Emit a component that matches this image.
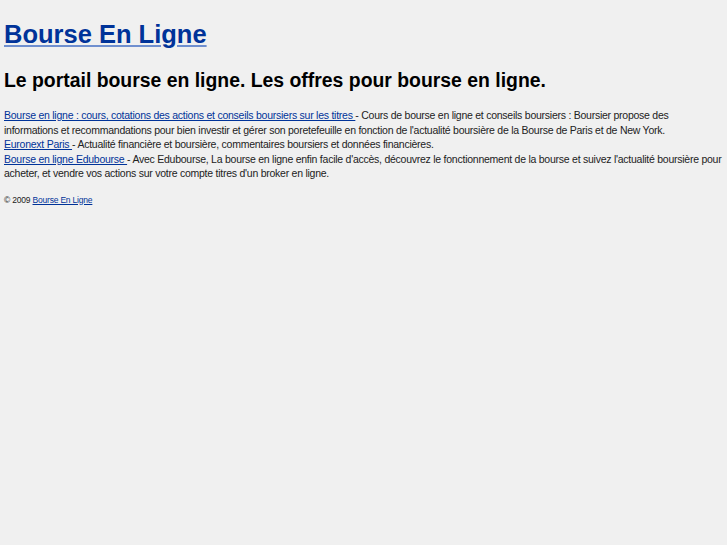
import React from 'react';

export default function App() {
  return (
    <div className="min-h-[545px] bg-[#f0f0f0] px-[4px] pt-[18px] text-black" style={{ fontFamily: '"Liberation Sans", Arial, sans-serif' }}>
      {/* Header */}
      <h1 className="text-[25.5px] font-bold leading-[32px]">
        <a href="#" className="text-[#003399] underline decoration-[#6f8fcf]">Bourse En Ligne</a>
      </h1>
      <h2 className="mt-[18px] text-[19.4px] font-bold leading-[24px]">
        Le portail bourse en ligne. Les offres pour bourse en ligne.
      </h2>

      {/* Liens */}
      <div className="mt-[16px] text-[10.5px] leading-[14.5px] tracking-[-0.25px] text-[#222]">
        <a href="#" className="text-[#003399] underline">Bourse en ligne : cours, cotations des actions et conseils boursiers sur les titres </a>
        {' '}- Cours de bourse en ligne et conseils boursiers : Boursier propose des informations et recommandations pour bien investir et gérer son poretefeuille en fonction de l'actualité boursière de la Bourse de Paris et de New York.
        <br />
        <a href="#" className="text-[#003399] underline">Euronext Paris </a>
        {' '}- Actualité financière et boursière, commentaires boursiers et données financières.
        <br />
        <a href="#" className="text-[#003399] underline">Bourse en ligne Edubourse </a>
        {' '}- Avec Edubourse, La bourse en ligne enfin facile d'accès, découvrez le fonctionnement de la bourse et suivez l'actualité boursière pour acheter, et vendre vos actions sur votre compte titres d'un broker en ligne.
      </div>

      {/* Pied de page */}
      <div className="mt-[14px] text-[8.5px] leading-[10px] tracking-[-0.2px] text-[#222]">
        © 2009 <a href="#" className="text-[#003399] underline">Bourse En Ligne </a>
      </div>
    </div>
  );
}
